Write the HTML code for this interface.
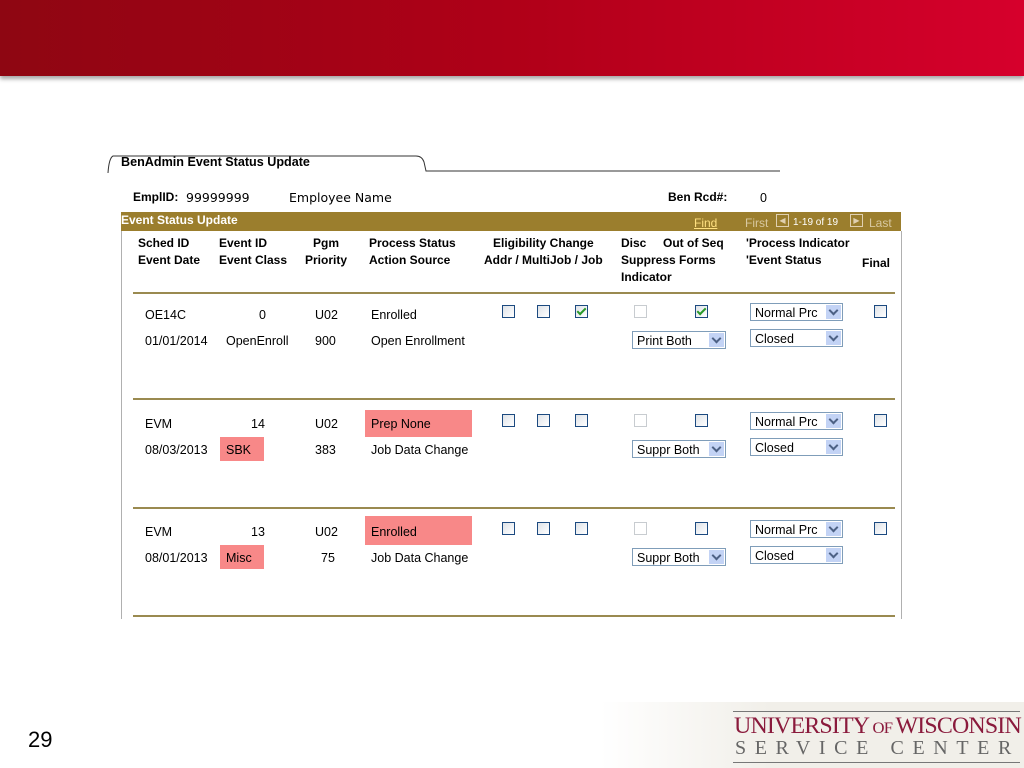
<!DOCTYPE html>
<html><head><style>
body{margin:0;width:1024px;height:768px;position:relative;background:#fff;font-family:"Liberation Sans",Arial,sans-serif;overflow:hidden}
.a{position:absolute;white-space:nowrap}
.hdr{position:absolute;left:0;top:0;width:1024px;height:76px;background:linear-gradient(90deg,#8e0612 0%,#b00018 50%,#d6002c 100%);box-shadow:0 3px 4px rgba(0,0,0,.35)}
.t{font-size:12.5px;color:#000}
.b{font-size:12px;font-weight:bold;color:#000}
.cb{position:absolute;width:11px;height:11px;border:1px solid #1c4a80;background:linear-gradient(135deg,#dfe3e8,#fff)}
.cb.d{border-color:#c8ccd0;background:#fff}
.ck::after{content:"";position:absolute;left:3px;top:0px;width:3px;height:7px;border:solid #2a9a2a;border-width:0 2px 2px 0;transform:rotate(45deg)}
.sel{position:absolute;height:18px;border:1px solid #7f9db9;background:#fff;font-size:12.5px;line-height:18px;padding-left:4px;box-sizing:border-box}
.sel::after{content:"";position:absolute;right:1px;top:1px;width:15px;height:14px;background:#c3d3f5;border:0}
.sel span.v{position:absolute;right:5px;top:3px;width:5px;height:5px;border:solid #4d6185;border-width:0 2px 2px 0;transform:rotate(45deg);z-index:2}
.hl{position:absolute;background:#f88888}
.ln{position:absolute;left:133px;width:762px;height:2px;background:#9a8a50}
</style></head><body>
<div class="hdr"></div>

<svg class="a" style="left:104px;top:152px" width="680" height="22"><path d="M4 21 Q5 6 9 4 L312 4 Q318 4 320 10 L322 19 L676 19" fill="none" stroke="#333" stroke-width="1"/></svg>
<div class="a b" style="left:121px;top:155px;font-size:12.6px">BenAdmin Event Status Update</div>

<div class="a b" style="left:133px;top:190px">EmplID:</div>
<div class="a t" style="left:186px;top:190px;font-family:'DejaVu Sans';font-size:12.5px">99999999</div>
<div class="a t" style="left:289px;top:190px;font-family:'DejaVu Sans';font-size:12.5px">Employee Name</div>
<div class="a b" style="left:668px;top:190px">Ben Rcd#:</div>
<div class="a t" style="left:760px;top:191px">0</div>

<div class="a" style="left:121px;top:212px;width:780px;height:19px;background:#9b7e2d"></div>
<div class="a" style="left:121px;top:213px;font-size:12px;font-weight:bold;color:#fff">Event Status Update</div>
<div class="a" style="left:694px;top:216px;font-size:12px;color:#ffe080;text-decoration:underline">Find</div>
<div class="a" style="left:745px;top:216px;font-size:12px;color:#d8c8a0">First</div>
<div class="a" style="left:776px;top:214px;width:11px;height:11px;border:1px solid #e0d0b0;font-size:8px;color:#e0d0b0;line-height:11px;text-align:center">◀</div>
<div class="a" style="left:793px;top:217px;font-size:10px;color:#fff">1-19 of 19</div>
<div class="a" style="left:850px;top:214px;width:11px;height:11px;border:1px solid #e0d0b0;font-size:8px;color:#e0d0b0;line-height:11px;text-align:center">▶</div>
<div class="a" style="left:869px;top:216px;font-size:12px;color:#d8c8a0">Last</div>

<div class="a" style="left:121px;top:231px;width:1px;height:388px;background:#b0b0b0"></div>
<div class="a" style="left:901px;top:231px;width:1px;height:388px;background:#b0b0b0"></div>

<div class="a b" style="left:138px;top:235px;line-height:17px">Sched ID<br>Event Date</div>
<div class="a b" style="left:219px;top:235px;line-height:17px">Event ID<br>Event Class</div>
<div class="a b" style="left:305px;top:235px;line-height:17px;text-align:center">Pgm<br>Priority</div>
<div class="a b" style="left:369px;top:235px;line-height:17px">Process Status<br>Action Source</div>
<div class="a b" style="left:484px;top:235px;line-height:17px;text-align:center">Eligibility Change<br>Addr / MultiJob / Job</div>
<div class="a b" style="left:621px;top:235px;line-height:17px">Disc&nbsp;&nbsp;&nbsp;&nbsp;&nbsp;Out of Seq<br>Suppress Forms<br>Indicator</div>
<div class="a b" style="left:746px;top:235px;line-height:17px">'Process Indicator<br>'Event Status</div>
<div class="a b" style="left:862px;top:256px">Final</div>

<div class="ln" style="top:292px"></div>
<div class="ln" style="top:398px"></div>
<div class="ln" style="top:507px"></div>
<div class="ln" style="top:615px"></div>

<div class="hl" style="left:365px;top:410px;width:107px;height:27px"></div>
<div class="hl" style="left:220px;top:437px;width:44px;height:24px"></div>
<div class="hl" style="left:365px;top:516px;width:107px;height:29px"></div>
<div class="hl" style="left:220px;top:545px;width:44px;height:24px"></div>

<div class="a t" style="left:145px;top:308px">OE14C</div>
<div class="a t" style="left:259px;top:308px">0</div>
<div class="a t" style="left:315px;top:308px">U02</div>
<div class="a t" style="left:371px;top:308px">Enrolled</div>
<div class="a t" style="left:145px;top:334px">01/01/2014</div>
<div class="a t" style="left:226px;top:334px">OpenEnroll</div>
<div class="a t" style="left:315px;top:334px">900</div>
<div class="a t" style="left:371px;top:334px">Open Enrollment</div>

<div class="a t" style="left:145px;top:417px">EVM</div>
<div class="a t" style="left:251px;top:417px">14</div>
<div class="a t" style="left:315px;top:417px">U02</div>
<div class="a t" style="left:371px;top:417px">Prep None</div>
<div class="a t" style="left:145px;top:443px">08/03/2013</div>
<div class="a t" style="left:226px;top:443px">SBK</div>
<div class="a t" style="left:315px;top:443px">383</div>
<div class="a t" style="left:371px;top:443px">Job Data Change</div>

<div class="a t" style="left:145px;top:525px">EVM</div>
<div class="a t" style="left:251px;top:525px">13</div>
<div class="a t" style="left:315px;top:525px">U02</div>
<div class="a t" style="left:371px;top:525px">Enrolled</div>
<div class="a t" style="left:145px;top:551px">08/01/2013</div>
<div class="a t" style="left:226px;top:551px">Misc</div>
<div class="a t" style="left:321px;top:551px">75</div>
<div class="a t" style="left:371px;top:551px">Job Data Change</div>

<div class="cb" style="left:502px;top:305px"></div>
<div class="cb" style="left:537px;top:305px"></div>
<div class="cb ck" style="left:575px;top:305px"></div>
<div class="cb d" style="left:634px;top:305px"></div>
<div class="cb ck" style="left:695px;top:305px"></div>
<div class="cb" style="left:874px;top:305px"></div>

<div class="cb" style="left:502px;top:414px"></div>
<div class="cb" style="left:537px;top:414px"></div>
<div class="cb" style="left:575px;top:414px"></div>
<div class="cb d" style="left:634px;top:414px"></div>
<div class="cb" style="left:695px;top:414px"></div>
<div class="cb" style="left:874px;top:414px"></div>

<div class="cb" style="left:502px;top:522px"></div>
<div class="cb" style="left:537px;top:522px"></div>
<div class="cb" style="left:575px;top:522px"></div>
<div class="cb d" style="left:634px;top:522px"></div>
<div class="cb" style="left:695px;top:522px"></div>
<div class="cb" style="left:874px;top:522px"></div>

<div class="sel" style="left:750px;top:303px;width:93px">Normal Prc<span class="v"></span></div>
<div class="sel" style="left:750px;top:329px;width:93px">Closed<span class="v"></span></div>
<div class="sel" style="left:632px;top:331px;width:94px">Print Both<span class="v"></span></div>
<div class="sel" style="left:750px;top:412px;width:93px">Normal Prc<span class="v"></span></div>
<div class="sel" style="left:750px;top:438px;width:93px">Closed<span class="v"></span></div>
<div class="sel" style="left:632px;top:440px;width:94px">Suppr Both<span class="v"></span></div>
<div class="sel" style="left:750px;top:520px;width:93px">Normal Prc<span class="v"></span></div>
<div class="sel" style="left:750px;top:546px;width:93px">Closed<span class="v"></span></div>
<div class="sel" style="left:632px;top:548px;width:94px">Suppr Both<span class="v"></span></div>

<div class="a" style="left:600px;top:702px;width:424px;height:66px;background:linear-gradient(90deg,#fff,#f1efe9 40%,#f1efe9)"></div>
<div class="a" style="left:28px;top:727px;font-size:22px;color:#000">29</div>
<div class="a" style="left:733px;top:711px;width:287px;height:1px;background:#777"></div>
<div class="a" style="left:734px;top:713px;font-family:'Liberation Serif',serif;font-size:23px;color:#8a1a3c;letter-spacing:-0.8px;transform:scaleX(1.04);transform-origin:left">UNIVERSITY<span style="font-size:16px"> OF </span>WISCONSIN</div>
<div class="a" style="left:735px;top:737px;font-family:'Liberation Serif',serif;font-size:20px;color:#666;letter-spacing:8.6px">SERVICE CENTER</div>
<div class="a" style="left:733px;top:762px;width:287px;height:1px;background:#777"></div>
</body></html>
